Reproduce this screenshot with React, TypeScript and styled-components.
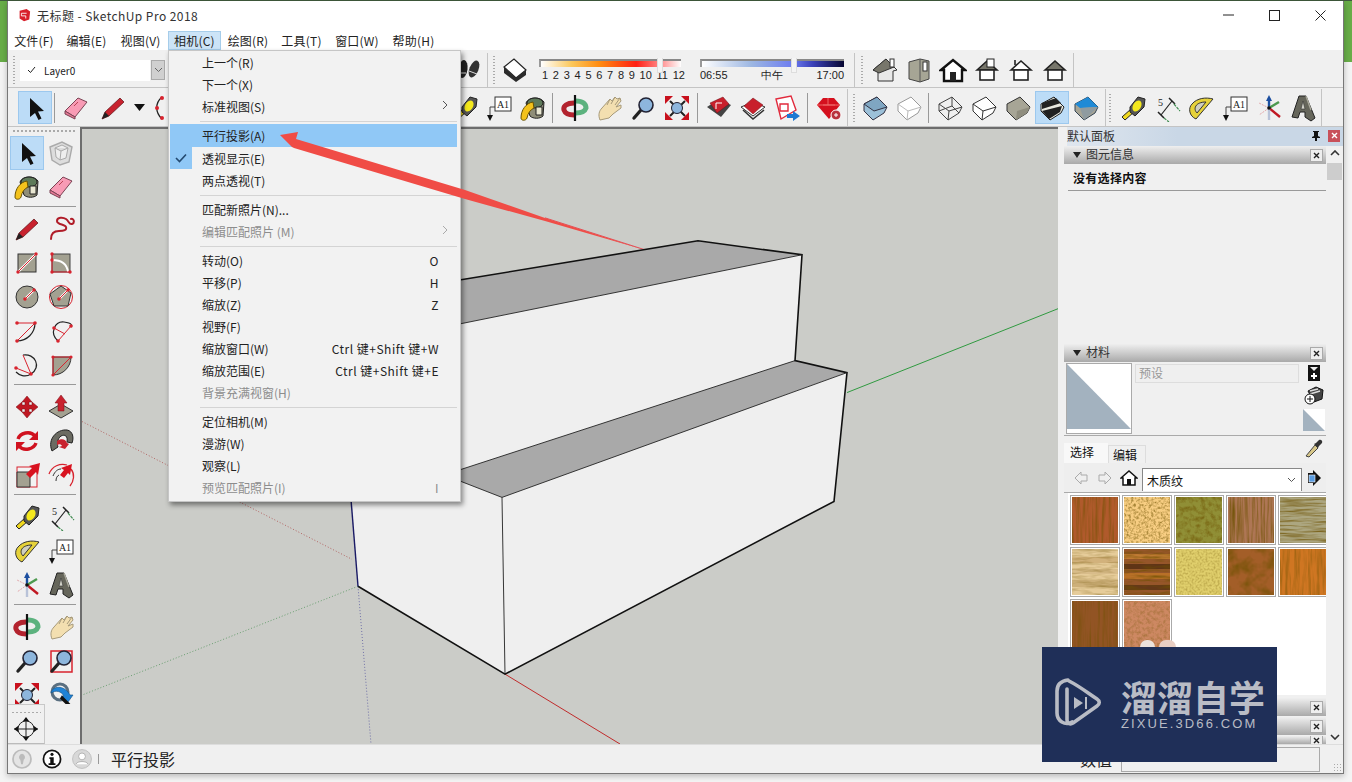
import React from "react";
import styled, { createGlobalStyle } from "styled-components";

const Global = createGlobalStyle`
  html, body { margin: 0; padding: 0; width: 1352px; height: 782px; overflow: hidden; background: #f4f4f4; }
  * { box-sizing: border-box; }
  body { font-family: "Noto Sans CJK SC", "Liberation Sans", sans-serif; font-size: 12px; color: #222; }
`;

const Page = styled.div`
  position: relative;
  width: 1352px;
  height: 782px;
  padding: 1px 8px 8px 7px;
  background:
    linear-gradient(#3f5a3c, #3f5a3c) top / 100% 1px no-repeat,
    linear-gradient(#68ad48, #68ad48) top / 100% 62px no-repeat,
    #f4f4f4;
`;
const Win = styled.div`
  display: flex;
  flex-direction: column;
  width: 100%;
  height: 100%;
  background: #f0f0f0;
  border: 1px solid #777;
  border-top: 0;
  box-shadow: 0 2px 6px rgba(0, 0, 0, 0.25);
`;
const TitleBar = styled.div`
  display: flex;
  align-items: center;
  height: 30px;
  padding: 0 0 2px 9px;
  background: #fff;
  flex: none;
`;
const TitleText = styled.span`
  margin-left: 6px;
  font-size: 12px;
  letter-spacing: 0.45px;
  color: #333;
`;
const WinButtons = styled.div`
  margin-left: auto;
  display: flex;
  height: 100%;
`;
const WinButton = styled.div`
  width: 46px;
  display: flex;
  align-items: center;
  justify-content: center;
`;
const MenuBar = styled.div`
  display: flex;
  height: 19px;
  background: #fff;
  flex: none;
`;
const MenuTop = styled.div<{ $w: number; $on?: boolean }>`
  width: ${(p) => p.$w}px;
  display: flex;
  align-items: center;
  justify-content: center;
  font-size: 12px;
  letter-spacing: 0.2px;
  color: #222;
  background: ${(p) => (p.$on ? "#cce4f7" : "transparent")};
  border: 1px solid ${(p) => (p.$on ? "#a6cdea" : "transparent")};
`;
const Bar = styled.div<{ $h: number; $pt?: number }>`
  display: flex;
  align-items: center;
  height: ${(p) => p.$h}px;
  padding-top: ${(p) => p.$pt ?? 0}px;
  background: #f0f0f0;
  border-bottom: 1px solid #c4c4c4;
  flex: none;
`;
const Gap = styled.div<{ $w: number }>`
  width: ${(p) => p.$w}px;
  flex: none;
`;
const Grip = styled.div`
  width: 2px;
  height: 28px;
  flex: none;
  background-image: linear-gradient(#aaa 50%, transparent 50%);
  background-size: 2px 3px;
`;
const Sep = styled.div<{ $l?: number; $r?: number }>`
  width: 1px;
  height: 30px;
  background: #999;
  flex: none;
  margin-left: ${(p) => p.$l ?? 2}px;
  margin-right: ${(p) => p.$r ?? 2}px;
`;
const Edge = styled.div<{ $l?: number; $r?: number }>`
  width: 1px;
  align-self: stretch;
  background: #c4c4c4;
  flex: none;
  margin-left: ${(p) => p.$l ?? 0}px;
  margin-right: ${(p) => p.$r ?? 0}px;
`;
const Btn = styled.div<{ $on?: boolean }>`
  width: 34px;
  height: 33px;
  flex: none;
  display: flex;
  align-items: center;
  justify-content: center;
  background: ${(p) => (p.$on ? "#bcdcf7" : "transparent")};
  border: 1px solid ${(p) => (p.$on ? "#9cc8ee" : "transparent")};
`;
const IconSvg = styled.svg<{ $s?: number }>`
  width: ${(p) => p.$s ?? 28}px;
  height: ${(p) => p.$s ?? 28}px;
  display: block;
  flex: none;
`;
const SmallBtn = styled.div`
  width: 18px;
  display: flex;
  align-items: center;
  justify-content: center;
  flex: none;
`;
const LayerBox = styled.div`
  width: 130px;
  height: 21px;
  margin-left: 5px;
  background: #fff;
  display: flex;
  align-items: center;
  padding-left: 7px;
  gap: 8px;
  font-size: 10px;
  flex: none;
`;
const LayerDrop = styled.div`
  width: 14px;
  height: 20px;
  margin-left: 1px;
  background: #d0d0d0;
  border: 1px solid #aaa;
  display: flex;
  align-items: center;
  justify-content: center;
  flex: none;
`;
const SliderWrap = styled.div<{ $w: number }>`
  position: relative;
  width: ${(p) => p.$w}px;
  flex: none;
  display: flex;
  flex-direction: column;
  gap: 2px;
`;
const Track = styled.div<{ $bg: string }>`
  height: 8px;
  background: ${(p) => p.$bg};
  border-top: 2px solid #888;
  border-left: 2px solid #999;
`;
const Thumb = styled.div`
  position: absolute;
  top: -1px;
  width: 6px;
  height: 15px;
  background: #f4f4f4;
  border: 1px solid #ddd;
  border-top: 0;
`;
const Ticks = styled.div<{ $wide?: boolean }>`
  display: flex;
  justify-content: space-between;
  margin: ${(p) => (p.$wide ? "0 -4px 0 3px" : "0")};
  font-family: "Liberation Sans", sans-serif;
  font-size: 11px;
  line-height: 12px;
  color: #222;
`;
const Body = styled.div`
  display: flex;
  flex: 1;
  min-height: 0;
`;
const LeftBar = styled.div`
  width: 72px;
  flex: none;
  display: flex;
  flex-direction: column;
  overflow: hidden;
  background: #f0f0f0;
`;
const LeftGrip = styled.div`
  height: 9px;
  flex: none;
  margin: 0 4px;
  background-image: radial-gradient(#aaa 0.8px, transparent 1px);
  background-size: 4px 4px;
  background-position: 0 2px;
  background-repeat: repeat-x;
`;
const ToolScroll = styled.div`
  flex: 1;
  min-height: 0;
  overflow: hidden;
  padding-left: 2px;
`;
const ToolGrid = styled.div`
  display: grid;
  grid-template-columns: 34px 34px;
  grid-auto-rows: 34px;
`;
const ToolRule = styled.div`
  height: 1px;
  background: #999;
  margin: 2px 4px 5px 4px;
`;
const ToolCell = styled.div<{ $on?: boolean }>`
  display: flex;
  align-items: center;
  justify-content: center;
  background: ${(p) => (p.$on ? "#bcdcf7" : "transparent")};
  border: 1px solid ${(p) => (p.$on ? "#9cc8ee" : "transparent")};
`;
const CameraBox = styled.div`
  width: 37px;
  height: 40px;
  flex: none;
  border: 1px solid #c8c8c8;
  border-left: 0;
  border-bottom-color: #bbb;
  display: flex;
  flex-direction: column;
  align-items: center;
  padding-top: 6px;
  gap: 1px;
`;
const CamDots = styled.div`
  width: 30px;
  height: 3px;
  flex: none;
  background-image: radial-gradient(#aaa 0.8px, transparent 1px);
  background-size: 4px 3px;
`;
const CanvasWrap = styled.div`
  width: 978px;
  flex: none;
  background: #cbccc8;
  border-left: 2px solid #6d6d6d;
  border-top: 2px solid #6d6d6d;
  overflow: hidden;
`;
const CanvasSvg = styled.svg`
  display: block;
  width: 100%;
  height: 100%;
`;
const Right = styled.div`
  flex: 1;
  min-width: 0;
  display: flex;
  flex-direction: column;
  padding-left: 6px;
  background: #f0f0f0;
`;
const PanelTitle = styled.div`
  height: 19px;
  flex: none;
  margin-left: 3px;
  display: flex;
  align-items: center;
  padding: 0 3px 2px 0;
  font-size: 12px;
  color: #333;
  background: linear-gradient(90deg, #dfe6ee, #c9d7e6 40%, #c9d7e6);
`;
const PinBox = styled.div`
  margin-left: auto;
  margin-right: 7px;
  display: flex;
`;
const CloseRed = styled.div`
  width: 12px;
  height: 12px;
  background: #c8505a;
  display: flex;
  align-items: center;
  justify-content: center;
`;
const PanelMain = styled.div`
  flex: 1;
  min-height: 0;
  display: flex;
`;
const Stack = styled.div`
  width: 262px;
  flex: none;
  display: flex;
  flex-direction: column;
  overflow: hidden;
`;
const Scroll = styled.div`
  flex: 1;
  position: relative;
  display: flex;
  flex-direction: column;
  align-items: center;
  justify-content: space-between;
  padding: 4px 0;
`;
const ScrollThumb = styled.div`
  position: absolute;
  top: 17px;
  left: 1px;
  width: 15px;
  height: 17px;
  background: #cdcdcd;
`;
const SecHead = styled.div<{ $h?: number; $mt?: number }>`
  height: ${(p) => p.$h ?? 18}px;
  margin-top: ${(p) => p.$mt ?? 0}px;
  flex: none;
  display: flex;
  align-items: center;
  padding: 0 3px 3px 9px;
  gap: 5px;
  font-size: 12px;
  color: #333;
  background: linear-gradient(#efefef, #a9a9a9);
  overflow: hidden;
`;
const Tri = styled.span`
  width: 0;
  height: 0;
  margin-top: 2px;
  border-left: 4px solid transparent;
  border-right: 4px solid transparent;
  border-top: 6px solid #222;
`;
const XBox = styled.div`
  margin: 3px 0 0 auto;
  width: 13px;
  height: 13px;
  flex: none;
  background: #eee;
  border: 1px solid #aaa;
  display: flex;
  align-items: center;
  justify-content: center;
`;
const InfoArea = styled.div`
  height: 180px;
  flex: none;
  padding: 5px 0 0 4px;
`;
const InfoText = styled.div`
  font-weight: 700;
  font-size: 12px;
  padding: 0 0 5px 5px;
  height: 22px;
  line-height: 18px;
  letter-spacing: 0.3px;
  border-bottom: 1px solid #999;
  color: #111;
`;
const MatRow = styled.div`
  height: 74px;
  flex: none;
  display: flex;
  padding: 1px 0 0 2px;
  border-bottom: 1px solid #aaa;
`;
const Preview = styled.div`
  width: 66px;
  height: 71px;
  flex: none;
  border: 1px solid #aaa;
  background: #fff;
`;
const NameInput = styled.div`
  width: 164px;
  height: 19px;
  flex: none;
  margin: 1px 0 0 3px;
  background: #efefef;
  border: 1px solid #ddd;
  color: #999;
  font-size: 12px;
  line-height: 16px;
  padding-left: 3px;
`;
const MatSide = styled.div`
  flex: 1;
  display: flex;
  flex-direction: column;
  align-items: center;
  padding-left: 2px;
`;
const Tabs = styled.div`
  height: 27px;
  flex: none;
  display: flex;
  align-items: flex-end;
  padding-right: 2px;
`;
const Tab = styled.div<{ $on?: boolean; $w: number; $pr: number }>`
  width: ${(p) => p.$w}px;
  height: ${(p) => (p.$on ? 20 : 18)}px;
  padding-right: ${(p) => p.$pr}px;
  background: ${(p) => (p.$on ? "#f8f8f8" : "#f0f0f0")};
  border: ${(p) => (p.$on ? "0" : "1px solid #ddd")};
  border-bottom: 0;
  text-align: center;
  font-size: 12px;
  line-height: 17px;
  color: #111;
`;
const TabEnd = styled.div`
  margin: 0 0 1px auto;
  align-self: center;
`;
const NavRow = styled.div`
  height: 30px;
  flex: none;
  display: flex;
  align-items: flex-end;
  padding: 0 0 1px 5px;
  background: #eeeeee;
  border-bottom: 1px solid #aaa;
`;
const NavBtn = styled.div`
  width: 24px;
  height: 26px;
  display: flex;
  align-items: center;
  justify-content: center;
  flex: none;
`;
const Select = styled.div`
  width: 160px;
  height: 23px;
  flex: none;
  margin-left: 1px;
  background: #fff;
  border: 1px solid #888;
  border-bottom: 0;
  display: flex;
  align-items: center;
  justify-content: space-between;
  padding: 0 5px 0 4px;
  font-size: 12px;
  color: #111;
`;
const Swatches = styled.div`
  height: 202px;
  flex: none;
  margin-left: 4px;
  background: #fff;
  padding: 3px 0 0 3px;
  display: grid;
  grid-template-columns: repeat(5, 48px);
  grid-auto-rows: 48px;
  gap: 4px;
  overflow: hidden;
`;
const Swatch = styled.div`
  outline: 1px solid #aaa;
  outline-offset: 1px;
  margin: 1px;
  overflow: hidden;
`;
const TexSvg = styled.svg`
  display: block;
  width: 46px;
  height: 46px;
`;
const Status = styled.div`
  height: 29px;
  flex: none;
  display: flex;
  align-items: center;
  background: #f0f0f0;
  border-top: 1px solid #ddd;
  position: relative;
`;
const StatusText = styled.div<{ $l: number }>`
  margin-left: ${(p) => p.$l}px;
  font-size: 16px;
  color: #222;
  flex: none;
`;
const StatusDiv = styled.div`
  width: 1px;
  height: 10px;
  background: #999;
  flex: none;
  margin-left: 4px;
`;
const StatusIcon = styled.div<{ $l: number }>`
  margin-left: ${(p) => p.$l}px;
  flex: none;
  display: flex;
`;
const StatusInput = styled.div`
  width: 199px;
  height: 25px;
  flex: none;
  margin-left: 9px;
  background: #f0f0f0;
  border: 1px solid #aaa;
`;
const ResizeGrip = styled.div`
  position: absolute;
  right: 1px;
  bottom: 1px;
  width: 9px;
  height: 9px;
  background-image: radial-gradient(#aaa 0.8px, transparent 1px);
  background-size: 3px 3px;
`;
const Menu = styled.div`
  position: absolute;
  left: 168px;
  top: 50px;
  width: 293px;
  height: 452px;
  background: #f2f2f2;
  border: 1px solid #c6c6c6;
  box-shadow: 2px 3px 5px rgba(0, 0, 0, 0.45);
  padding: 0 3px 0 1px;
`;
const Item = styled.div<{ $on?: boolean; $off?: boolean }>`
  position: relative;
  height: ${(p) => (p.$on ? 23 : 22)}px;
  display: flex;
  align-items: center;
  padding-left: 32px;
  padding-right: 18px;
  font-size: 12px;
  color: ${(p) => (p.$off ? "#8d8d8d" : "#222")};
  background: ${(p) => (p.$on ? "#90c8f6" : "transparent")};
`;
const ItemKey = styled.span`
  margin-left: auto;
  letter-spacing: 0.5px;
`;
const Sub = styled.span`
  position: absolute;
  right: 9px;
  top: 5px;
  display: flex;
`;
const CheckCell = styled.span`
  position: absolute;
  left: 0;
  top: 0;
  width: 22px;
  height: 22px;
  background: #90c8f6;
  display: flex;
  align-items: center;
  justify-content: center;
`;
const MenuRule = styled.div`
  height: 1px;
  margin: 4px 0 2px 30px;
  background: #d4d4d4;
`;
const Overlay = styled.svg`
  position: absolute;
  left: 0;
  top: 0;
  width: 1352px;
  height: 782px;
  pointer-events: none;
`;
const Mark = styled.div`
  position: absolute;
  left: 1042px;
  top: 647px;
  width: 235px;
  height: 115px;
  background: #1f2f58;
  display: flex;
  align-items: center;
  padding: 0 0 4px 13px;
  gap: 18px;
  &::before, &::after {
    content: "";
    position: absolute;
    top: -7px;
    width: 15px;
    height: 7px;
    border-radius: 8px 8px 0 0;
    background: #ece2dc;
  }
  &::before { left: 98px; }
  &::after { left: 117px; width: 17px; background: #e8cfc4; }
`;
const MarkText = styled.div`
  display: flex;
  flex-direction: column;
  color: #b9bcc5;
`;
const MarkBig = styled.div`
  font-size: 36px;
  font-weight: 700;
  line-height: 42px;
  white-space: nowrap;
`;
const MarkSmall = styled.div`
  font-family: "Liberation Sans", sans-serif;
  font-size: 13px;
  line-height: 14px;
  letter-spacing: 2.1px;
  white-space: nowrap;
`;

const R = "#d8232e";
const GY = "#a3a191";
const HEX = "M3 10 16 3 26 13 23 19 12 26 3 17z";
const HEXIN = "M3 10 13 17 26 13M13 17 12 26";
const house = (roof: string, wall: string, extra?: React.ReactNode) => (
  <>
    <path d="M4 14 14 5 24 14z" fill={roof} stroke="#222" strokeWidth="1.6" />
    <rect x="7" y="14" width="14" height="10" fill={wall} stroke="#222" strokeWidth="1.6" />
    {extra}
  </>
);
const zoomGlass = (
  <>
    <path d="M5 24 12 16" stroke="#222" strokeWidth="3.4" strokeLinecap="round" />
    <circle cx="17" cy="11" r="7" fill="#8db6dd" stroke="#223" strokeWidth="1.6" />
  </>
);

const icons: Record<string, React.ReactNode> = {
  select: <path d="M9 4v19l5-4 3.5 7 3-1.5-3.5-7 6-.5z" fill="#111" />,
  eraser: (
    <>
      <path d="M3 17 16 4l9 4-12 15z" fill="#f89bb5" stroke="#7a4354" />
      <path d="M3 17l10 6v2L3 20z" fill="#e67995" stroke="#7a4354" />
      <path d="M12 12l4-4" stroke="#b45" />
    </>
  ),
  pencil: (
    <>
      <path d="M3 25l3-7 15-14 4 4L10 22z" fill="#c8222e" stroke="#5a1116" strokeWidth=".7" />
      <path d="M3 25l3-7 4 4z" fill="#222" />
    </>
  ),
  arcSel: (
    <>
      <path d="M11 3C4 9 4 18 11 25" fill="none" stroke="#222" strokeWidth="1.3" />
      <circle cx="11" cy="4" r="2" fill={R} />
      <circle cx="11" cy="24" r="2" fill={R} />
      <circle cx="6" cy="14" r="2" fill={R} />
    </>
  ),
  paint: (
    <>
      <path d="M7 9C9 3 21 2 25 8l-1 14c-3 3-10 3-13 0z" fill="#8f8d78" stroke="#222" />
      <ellipse cx="16" cy="9" rx="8" ry="5" fill="#5e7a5a" stroke="#222" />
      <path d="M17 13h6v8h-6z" fill="#e9e7d2" stroke="#222" />
      <path d="M14 8C7 9 2 16 2 24c0 3 5 3 6 0 1-5 3-8 7-10z" fill="#f4c21c" stroke="#6a5200" />
    </>
  ),
  line: (
    <>
      <path d="M3 25l3-7 15-14 4 4L10 22z" fill="#c8222e" stroke="#5a1116" strokeWidth=".7" />
      <path d="M3 25l3-7 4 4z" fill="#222" />
    </>
  ),
  free: <path d="M4 24c0-5 3-8 8-8s8-1 7-4-9-2-9-6 6-4 9-2 3 6 6 5 2-6-1-5" fill="none" stroke="#b01c28" strokeWidth="2" strokeLinecap="round" />,
  rect: (
    <>
      <rect x="5" y="5" width="18" height="18" fill={GY} stroke="#333" />
      <path d="M5 23 23 5" stroke="#fff" strokeWidth="2.4" />
      <path d="M5 23 23 5" stroke={R} />
      <circle cx="23" cy="5" r="1.7" fill={R} />
      <circle cx="5" cy="23" r="1.7" fill={R} />
    </>
  ),
  rotrect: (
    <>
      <rect x="5" y="5" width="18" height="18" fill={GY} stroke="#444" />
      <path d="M5 11c10 0 15 4 16 12" fill="none" stroke="#fff" strokeWidth="2" />
      <path d="M5 5v18h18" fill="none" stroke={R} />
      <circle cx="5" cy="5" r="1.7" fill={R} />
      <circle cx="5" cy="23" r="1.7" fill={R} />
      <circle cx="23" cy="23" r="1.7" fill={R} />
      <circle cx="5" cy="11" r="1.7" fill={R} />
    </>
  ),
  circle: (
    <>
      <circle cx="14" cy="14" r="11" fill={GY} stroke="#333" />
      <path d="M12 16 21 7" stroke="#fff" strokeWidth="2.4" />
      <path d="M12 16 21 7" stroke={R} />
      <circle cx="12" cy="16" r="1.8" fill={R} />
      <circle cx="21" cy="7" r="1.7" fill={R} />
    </>
  ),
  polygon: (
    <>
      <circle cx="14" cy="14" r="11.5" fill="none" stroke={R} />
      <path d="M14 3 24 10 21 23 7 23 3 11z" fill={GY} stroke="#333" />
      <path d="M12 16 21 7" stroke="#fff" strokeWidth="2.2" />
      <path d="M12 16 21 7" stroke={R} />
      <circle cx="12" cy="16" r="1.8" fill={R} />
      <circle cx="21" cy="7" r="1.7" fill={R} />
    </>
  ),
  arc1: (
    <>
      <path d="M4 6H22L4 24" fill="none" stroke={R} />
      <path d="M4 24C14 24 22 16 22 6" fill="none" stroke="#222" strokeWidth="1.2" />
      <circle cx="4" cy="6" r="1.8" fill={R} />
      <circle cx="22" cy="6" r="1.8" fill={R} />
      <circle cx="4" cy="24" r="1.8" fill={R} />
    </>
  ),
  arc2: (
    <>
      <path d="M11 24C2 16 8 4 17 5s8 4 7 5" fill="none" stroke="#222" strokeWidth="1.2" />
      <path d="M11 24 24 9M7 11l11 6" stroke={R} />
      <circle cx="11" cy="24" r="1.8" fill={R} />
      <circle cx="24" cy="9" r="1.8" fill={R} />
      <circle cx="7" cy="11" r="1.8" fill={R} />
    </>
  ),
  arc3: (
    <>
      <path d="M10 4C22 2 29 16 18 23 12 27 6 24 3 21" fill="none" stroke="#222" strokeWidth="1.2" />
      <path d="M10 4 18 23 3 17" fill="none" stroke={R} />
      <circle cx="18" cy="23" r="1.8" fill={R} />
      <circle cx="3" cy="17" r="1.8" fill={R} />
    </>
  ),
  pie: (
    <>
      <path d="M6 24V6H24C24 16 16 24 6 24z" fill={GY} stroke="#333" />
      <path d="M6 24 24 6H6z" fill="none" stroke={R} />
      <circle cx="6" cy="6" r="1.6" fill={R} />
      <circle cx="24" cy="6" r="1.6" fill={R} />
      <circle cx="6" cy="24" r="1.6" fill={R} />
    </>
  ),
  move: <path d="M14 3l5 6h-3v3h3V9l6 5-6 5v-3h-3v3h3l-5 6-5-6h3v-3H9v3l-6-5 6-5v3h3V9H9z" fill="#c01822" stroke="#7a0f16" strokeWidth=".5" />,
  push: (
    <>
      <path d="M2 18 14 11 26 18 14 25z" fill={GY} stroke="#333" />
      <path d="M14 2l6 8h-3v8h-6v-8H8z" fill="#c8222e" stroke="#7a0f16" strokeWidth=".5" />
    </>
  ),
  rotate: (
    <>
      <path d="M5 12C7 6 17 3 22 9" fill="none" stroke="#d0121f" strokeWidth="3.4" />
      <path d="M23 16C21 22 11 25 6 19" fill="none" stroke="#d0121f" strokeWidth="3.4" />
      <path d="M25 4v9h-9zM3 24v-9h9z" fill="#d0121f" />
    </>
  ),
  follow: (
    <>
      <path d="M5 24C0 12 10 2 20 3c6 1 7 8 5 13l-5-1c1-6-2-8-6-6-4 3-4 8-3 11z" fill="#6b6b62" stroke="#222" />
      <path d="M10 14c4-3 9-2 10 2l2 1-4 5-6-2 3-1c-1-2-3-2-5-1z" fill="#c8222e" />
    </>
  ),
  scale: (
    <>
      <rect x="4" y="6" width="20" height="20" fill="#fff" fillOpacity=".2" stroke={R} />
      <path d="M4 11H17V26H4z" fill={GY} stroke="#333" />
      <path d="M27 2 16 5l3 2-6 6 4 4 6-6 2 3z" fill="#d8121f" />
    </>
  ),
  offset: (
    <>
      <path d="M2 13C5 5 13 2 20 4M24 8c4 5 3 12 -1 17" fill="none" stroke={R} strokeWidth="1.3" />
      <path d="M6 15C8 10 11 8 14 8M9 20c0-3 1-5 3-6" fill="none" stroke="#333" />
      <path d="M25 3 14 7l3 2-4 5 4 3 4-5 2 2z" fill="#d8121f" />
    </>
  ),
  tape: (
    <>
      <path d="M3 23 12 15l3 3-9 8z" fill="#f0d81e" stroke="#222" />
      <path d="M11 13 19 3l7 2-1 8-9 9-5-4z" fill="#555" stroke="#222" />
      <ellipse cx="18" cy="12" rx="4" ry="6" transform="rotate(30 18 12)" fill="#f4e81c" />
    </>
  ),
  dim: (
    <>
      <path d="M8 21 19 7" stroke="#222" strokeWidth="1.2" />
      <path d="M5 18l6 6M16 4l6 6" stroke="#222" strokeWidth="1.5" />
      <path d="M21 10l6 7M11 24l5 4" stroke="#3e8a4f" strokeWidth="1.2" strokeDasharray="3 1" />
      <text x="5" y="12" fontFamily="Liberation Serif" fontSize="10" fill="#222">5</text>
    </>
  ),
  proto: (
    <>
      <path d="M26 5 9 25C2 22 1 14 5 10 10 4 19 3 26 5z" fill="#e6d23a" stroke="#333" />
      <path d="M19 8 10 19C6 15 8 8 19 8z" fill="#cfcfc0" stroke="#333" />
    </>
  ),
  text: (
    <>
      <path d="M5 24V13h6" fill="none" stroke="#444" />
      <path d="M5 27 2 21h6z" fill="#111" />
      <rect x="10" y="3" width="16" height="14" fill="#fff" stroke="#333" />
      <text x="18" y="14" textAnchor="middle" fontFamily="Liberation Serif" fontSize="10" fill="#222">A1</text>
    </>
  ),
  axes: (
    <>
      <path d="M14 14V4" stroke="#1c4fa0" strokeWidth="2.4" />
      <path d="M14 1l3 6h-6z" fill="#1c4fa0" />
      <path d="M14 14 24 8" stroke="#4d9a4f" strokeWidth="2.4" />
      <path d="M14 14 25 23" stroke="#c01822" strokeWidth="2.4" />
      <path d="M14 14 4 21M14 14 4 9" stroke="#e3a8ab" strokeDasharray="2 1" />
      <path d="M14 14v12" stroke="#b8c2d8" strokeWidth="2.4" />
      <circle cx="14" cy="14" r="1.8" fill="#111" />
    </>
  ),
  text3d: (
    <>
      <path d="M10 2h7l9 22-4 3-6-4v-5h-5l-2 6-6-1z" fill="#66665b" stroke="#222" />
      <path d="M14 7l-2 8h4z" fill="#d4d4ca" stroke="#333" strokeWidth=".6" />
      <path d="M17 2l5 14" stroke="#aaa99c" strokeWidth="1.4" />
    </>
  ),
  orbit: (
    <>
      <path d="M13 9C6 9 2 12 3 16c1 3 5 5 10 5" fill="none" stroke="#b3232e" strokeWidth="5" />
      <path d="M15 7c7 0 10 3 10 7-1 3-4 5-10 5" fill="none" stroke="#5cb27e" strokeWidth="5" />
      <path d="M16 11l6 2-4 3z" fill="#eee" />
      <path d="M12 18l-6-2 4-3z" fill="#eee" />
      <path d="M14 1v26" stroke="#111" strokeWidth="2.2" />
    </>
  ),
  hand: (
    <>
      <path d="M5 26C3 21 4 17 7 14L15 5l2 2 3-4 2 2 3-1 1 3-5 6 5-2v3l-8 6-4 4z" fill="#f3dfb0" stroke="#a79a7a" />
      <path d="M15 5l-3 6M20 3l-4 7M25 4l-5 7" stroke="#a79a7a" fill="none" />
    </>
  ),
  zoom: zoomGlass,
  zoomWin: (
    <>
      <rect x="4" y="4" width="21" height="21" fill="none" stroke={R} strokeWidth="1.5" />
      {zoomGlass}
    </>
  ),
  zoomExt: (
    <>
      <path d="M7 22 12 17M22 22 17 17M7 7l5 5M22 7l-5 5" stroke="#222" strokeWidth="2" />
      <circle cx="14" cy="14" r="5.5" fill="#8db6dd" stroke="#223" />
      <path d="M2 2h8l-8 8zM26 2v8l-8-8zM2 26v-8l8 8zM26 26h-8l8-8z" fill="#c8101c" />
    </>
  ),
  prev: (
    <>
      <circle cx="13" cy="11" r="8" fill="none" stroke="#5a6f80" strokeWidth="3" />
      <path d="M4 12C5 5 17 3 23 14h3l-5 7-7-6h3C14 10 9 9 4 12z" fill="#1f83d6" stroke="#124d80" strokeWidth=".6" />
      <path d="M14 16 25 27" stroke="#111" strokeWidth="3.4" />
    </>
  ),
  position: (
    <>
      <circle cx="14" cy="14" r="8" fill="none" stroke="#222" />
      <path d="M2 14H26M14 3V25" stroke="#222" />
      <path d="M2 14l4-3v6zM26 14l-4-3v6zM14 2l-3 4h6zM14 26l-3-4h6z" fill="#111" />
    </>
  ),
  feet: (
    <>
      <ellipse cx="9" cy="13" rx="4.5" ry="9" transform="rotate(8 9 13)" fill="#222" />
      <ellipse cx="20" cy="13" rx="4.5" ry="9" transform="rotate(22 20 13)" fill="#333" />
      <path d="M4 17h8M15 15l8 3" stroke="#ddd" />
    </>
  ),
  shadow: (
    <>
      <path d="M3 11 13 3l12 11-10 8z" fill="#fff" stroke="#222" strokeWidth="1.2" />
      <path d="M3 11v6l12 9 10-7v-5L15 22z" fill="#2b2b2b" />
    </>
  ),
  h1: (
    <>
      <path d="M2 14 15 3l11 11-4 1v10H7V15z" fill="#e8e8e8" stroke="#333" />
      <path d="M2 14 15 3l8 8-15 6z" fill="#77766b" stroke="#333" />
      <rect x="19" y="3" width="4" height="8" fill="#fff" stroke="#333" />
    </>
  ),
  h2: (
    <>
      <path d="M4 6 15 3l9 2v18l-9 3-11-3z" fill="#a6a595" stroke="#444" />
      <path d="M15 3v23" stroke="#555" />
      <rect x="18" y="6" width="4" height="9" fill="#fff" stroke="#333" />
    </>
  ),
  h3: (
    <>
      <path d="M2 14 14 4l12 10h-3v11H5V14z" fill="#fff" stroke="#111" strokeWidth="2.4" />
      <rect x="11" y="16" width="6" height="9" fill="#222" />
    </>
  ),
  h4: house("#77766b", "#fff", <rect x="14" y="3" width="7" height="8" fill="#fff" stroke="#222" />),
  h5: house("#fff", "#fff", <path d="M8 4v5" stroke="#222" strokeWidth="1.6" />),
  h6: house("#77766b", "#fff"),
  cIso: (
    <>
      <path d={HEX} fill="#9cc0d8" stroke="#334" />
      <path d="M3 10 13 17 26 13 16 3z" fill="#7fa6c2" stroke="#334" />
    </>
  ),
  cGhost: (
    <>
      <path d={HEX} fill="#fff" stroke="#999" />
      <path d={HEXIN} stroke="#bbb" fill="none" />
    </>
  ),
  cWire: (
    <>
      <path d={HEX} fill="none" stroke="#444" />
      <path d={HEXIN} stroke="#444" fill="none" />
      <path d="M16 3V12L3 17M16 12 23 19" stroke="#444" fill="none" />
    </>
  ),
  cHidden: (
    <>
      <path d={HEX} fill="#fff" stroke="#333" />
      <path d={HEXIN} stroke="#333" fill="none" />
    </>
  ),
  cShade: (
    <>
      <path d={HEX} fill="#a7a596" stroke="#333" />
      <path d="M13 17 12 26 23 19 26 13z" fill="#8f8d7e" />
    </>
  ),
  cStripe: (
    <>
      <path d={HEX} fill="#e9e9e0" stroke="#222" />
      <path d="M4 9 18 4l5 5-19 6zM4 17l20-5-2 6-11 7z" fill="#222" />
    </>
  ),
  cBlue: (
    <>
      <path d={HEX} fill="#a7a596" stroke="#345" />
      <path d="M16 3 26 13 8 14 3 10z" fill="#1f8ad6" />
      <path d="M8 14 26 13 12 26z" fill="#8f9ba0" />
    </>
  ),
  wh1: (
    <>
      <path d="M2 13 14 5l12 6-10 12z" fill="#444" />
      <path d="M5 9 18 3l6 7-12 9z" fill="#c8202c" stroke="#701018" strokeWidth=".5" />
      <path d="M11 9h6M11 9v6" stroke="#fff" />
    </>
  ),
  wh2: (
    <>
      <path d="M2 13 14 22 26 13 14 8z" fill="#fff" stroke="#333" />
      <path d="M5 12 14 4l10 7-10 9z" fill="#c8202c" stroke="#701018" strokeWidth=".5" />
      <path d="M4 16 14 25l11-9" fill="none" stroke="#333" strokeWidth="1.6" />
    </>
  ),
  wh3: (
    <>
      <path d="M3 5 18 2l5 14-15 9z" fill="#fff" stroke="#e12a3c" strokeWidth="1.4" />
      <path d="M7 10h8v7H7z" fill="none" stroke="#e12a3c" strokeWidth="1.4" />
      <path d="M14 20h6v-3l7 5-7 5v-3h-6z" fill="#1d78d2" />
    </>
  ),
  ruby: (
    <>
      <path d="M3 11 9 4h11l6 7-11 14z" fill="#d4101e" />
      <path d="M9 11h12M3 11h23M14 4v7" stroke="#e66" />
      <circle cx="22" cy="21" r="5" fill="#b8323e" stroke="#fff" />
      <path d="M20 21h4M22 19v4" stroke="#fff" />
    </>
  ),
  sFind: (
    <>
      <circle cx="14" cy="14" r="10.5" fill="#e4e4e4" stroke="#bcbcbc" strokeWidth="2" />
      <path d="M14 8a4 4 0 0 1 2 7l-1 5h-2l-1-5a4 4 0 0 1 2-7z" fill="#bbb" />
    </>
  ),
  sInfo: (
    <>
      <circle cx="14" cy="14" r="10" fill="#fff" stroke="#111" strokeWidth="2" />
      <circle cx="14" cy="8.6" r="1.8" fill="#111" />
      <path d="M11 12h5v7h2v2h-8v-2h2v-5h-1z" fill="#111" />
    </>
  ),
  sUser: (
    <>
      <circle cx="14" cy="14" r="11" fill="#d8d8d8" stroke="#bbb" />
      <circle cx="14" cy="11" r="4" fill="#fff" stroke="#aaa" />
      <path d="M7 20c1-4 13-4 14 0" fill="#fff" stroke="#aaa" />
    </>
  ),
  cGhostBox: (
    <>
      <path d="M3 8 15 3l10 5-3 15-9 3-8-5z" fill="#ddd" stroke="#aaa" strokeWidth="1.4" />
      <path d="M8 9 15 6l6 3-2 10-6 2-4-3zM8 9l6 3 7-3M14 12l-1 9" fill="#eee" stroke="#aaa" />
    </>
  ),
};

const Icon = ({ n, s }: { n: string; s?: number }) => (
  <IconSvg viewBox="0 0 28 28" $s={s}>{icons[n]}</IconSvg>
);
const B = ({ n, on }: { n: string; on?: boolean }) => (
  <Btn $on={on}>
    <Icon n={n} />
  </Btn>
);
const Chev = ({ c = "#444" }: { c?: string }) => (
  <svg width="9" height="6" viewBox="0 0 9 6">
    <path d="M1 1l3.5 3.5L8 1" fill="none" stroke={c} />
  </svg>
);
const Cross = ({ c = "#222" }: { c?: string }) => (
  <svg width="7" height="7" viewBox="0 0 7 7">
    <path d="M1 1l5 5M6 1 1 6" stroke={c} strokeWidth="1.4" />
  </svg>
);

const topMenu: [string, number, boolean?][] = [
  ["文件(F)", 52],
  ["编辑(E)", 53],
  ["视图(V)", 55],
  ["相机(C)", 53, true],
  ["绘图(R)", 54],
  ["工具(T)", 53],
  ["窗口(W)", 58],
  ["帮助(H)", 55],
];

const leftGroups = [
  ["select", "cGhostBox", "paint", "eraser"],
  ["line", "free", "rect", "rotrect", "circle", "polygon", "arc1", "arc2", "arc3", "pie"],
  ["move", "push", "rotate", "follow", "scale", "offset"],
  ["tape", "dim", "proto", "text", "axes", "text3d"],
  ["orbit", "hand", "zoom", "zoomWin", "zoomExt", "prev"],
];

type Tex = { c: string; fx: number; fy: number; k?: number; bands?: [number, number, string][] };
const swatches: Tex[] = [
  { c: "#b05a2c", fx: 0.35, fy: 0.02, k: 0.5 },
  { c: "#f7cd82", fx: 0.4, fy: 0.4, k: 0.45 },
  { c: "#908f36", fx: 0.2, fy: 0.2, k: 0.45 },
  { c: "#ae7655", fx: 0.4, fy: 0.02, k: 0.6 },
  { c: "#aca680", fx: 0.03, fy: 0.5, k: 0.6 },
  {
    c: "#e6cc9a", fx: 0.05, fy: 0.3, k: 0.3,
    bands: [[8, 6, "#d2b27c"], [20, 5, "#d8bc8a"], [31, 7, "#cdb07a"]],
  },
  {
    c: "#96562a", fx: 0.05, fy: 0.3, k: 0.5,
    bands: [[5, 5, "#c07a34"], [15, 5, "#5f3416"], [24, 6, "#b87028"], [36, 5, "#643818"]],
  },
  { c: "#e0cf6c", fx: 0.5, fy: 0.5, k: 0.25 },
  { c: "#a35e28", fx: 0.08, fy: 0.08, k: 0.55 },
  { c: "#cf7622", fx: 0.35, fy: 0.03, k: 0.35 },
  { c: "#925424", fx: 0.35, fy: 0.02, k: 0.45 },
  { c: "#cd8862", fx: 0.3, fy: 0.3, k: 0.25 },
];

const TexArt = ({ t, i }: { t: Tex; i: number }) => (
  <TexSvg viewBox="0 0 46 46">
    <filter id={`tex${i}`} x="0" y="0" width="100%" height="100%">
      <feTurbulence type="fractalNoise" baseFrequency={`${t.fx} ${t.fy}`} numOctaves="3" seed={i + 3} />
      <feColorMatrix values={`0 0 0 0 0.15  0 0 0 0 0.08  0 0 0 0 0  ${(t.k ?? 0.5) * 3} 0 0 0 ${-(t.k ?? 0.5) * 1.2}`} />
    </filter>
    <rect width="46" height="46" fill={t.c} />
    {t.bands?.map(([y, h, c]) => <rect key={y} y={y} width="46" height={h} fill={c} />)}
    <rect width="46" height="46" filter={`url(#tex${i})`} />
  </TexSvg>
);

const Item2 = ({ t, k, off, on, check, sub }: { t: string; k?: string; off?: boolean; on?: boolean; check?: boolean; sub?: boolean }) => (
  <Item $off={off} $on={on}>
    {check && (
      <CheckCell>
        <svg width="12" height="10" viewBox="0 0 12 10">
          <path d="M1 5l3.5 3.5L11 1.5" fill="none" stroke="#244a70" strokeWidth="1.6" />
        </svg>
      </CheckCell>
    )}
    {t}
    {k && <ItemKey>{k}</ItemKey>}
    {sub && (
      <Sub>
        <svg width="6" height="10" viewBox="0 0 6 10">
          <path d="M1 1l4 4-4 4" fill="none" stroke={off ? "#aaa" : "#555"} />
        </svg>
      </Sub>
    )}
  </Item>
);

export default function App() {
  return (
    <Page>
      <Global />
      <Win>
        <TitleBar>
          <svg width="14" height="16" viewBox="0 0 16 16">
            <path d="M3 3 11 1l4 3-1 9-6 2-5-3z" fill="#d8202c" />
            <path d="M5 6h6M5 6v3h5v3" fill="none" stroke="#fff" />
          </svg>
          <TitleText>无标题 - SketchUp Pro 2018</TitleText>
          <WinButtons>
            <WinButton>
              <svg width="11" height="2" viewBox="0 0 11 2"><path d="M0 1h11" stroke="#222" /></svg>
            </WinButton>
            <WinButton>
              <svg width="11" height="11" viewBox="0 0 11 11"><rect x=".5" y=".5" width="10" height="10" fill="none" stroke="#222" /></svg>
            </WinButton>
            <WinButton>
              <svg width="11" height="11" viewBox="0 0 11 11"><path d="M.5.5l10 10M10.5.5l-10 10" stroke="#222" /></svg>
            </WinButton>
          </WinButtons>
        </TitleBar>
        <MenuBar>
          {topMenu.map(([t, w, on]) => (
            <MenuTop key={t} $w={w} $on={on}>{t}</MenuTop>
          ))}
        </MenuBar>

        <Bar $h={38} $pt={3}>
          <Gap $w={5} />
          <Grip />
          <LayerBox>
            <svg width="9" height="8" viewBox="0 0 9 8"><path d="M1 4l2.5 2.5L8 1" fill="none" stroke="#222" /></svg>
            Layer0
          </LayerBox>
          <LayerDrop><Chev c="#666" /></LayerDrop>
          <Gap $w={286} />
          <B n="feet" />
          <Edge $l={2} $r={5} />
          <Grip />
          <Gap $w={3} />
          <B n="shadow" />
          <Gap $w={7} />
          <SliderWrap $w={142}>
            <Track $bg="linear-gradient(90deg,#fff 0%,#fbc75a 22%,#ff8a10 42%,#ff1f14 68%,#ff8f8f 86%,#fff 100%)" />
            <Ticks $wide>
              <span>1</span><span>2</span><span>3</span><span>4</span><span>5</span><span>6</span><span>7</span><span>8</span><span>9</span><span>10</span><span>11</span><span>12</span>
            </Ticks>
            <Thumb style={{ left: 118 }} />
          </SliderWrap>
          <Gap $w={19} />
          <SliderWrap $w={144}>
            <Track $bg="linear-gradient(90deg,#fff 0%,#9cb6e2 35%,#6d7cf0 64%,#3a40b8 78%,#050530 100%)" />
            <Ticks>
              <span>06:55</span><span>中午</span><span>17:00</span>
            </Ticks>
            <Thumb style={{ left: 91 }} />
          </SliderWrap>
          <Edge $l={10} $r={6} />
          <Grip />
          <Gap $w={5} />
          <B n="h1" /><B n="h2" /><B n="h3" /><B n="h4" /><B n="h5" /><B n="h6" />
          <Edge $l={1} />
        </Bar>

        <Bar $h={39} $pt={1}>
          <Gap $w={10} />
          <B n="select" on />
          <Sep />
          <Gap $w={2} />
          <B n="eraser" />
          <Gap $w={3} />
          <B n="pencil" />
          <SmallBtn>
            <svg width="11" height="7" viewBox="0 0 11 7"><path d="M0 0h11L5.5 7z" fill="#111" /></svg>
          </SmallBtn>
          <B n="arcSel" />
          <Gap $w={266} />
          <B n="tape" /><B n="text" /><B n="paint" />
          <Sep />
          <Gap $w={3} />
          <B n="orbit" /><B n="hand" /><B n="zoom" /><B n="zoomExt" />
          <Sep $l={3} $r={4} />
          <B n="wh1" /><B n="wh2" /><B n="wh3" />
          <Sep $l={3} $r={3} />
          <B n="ruby" />
          <Edge $l={2} $r={5} />
          <Grip />
          <Gap $w={3} />
          <B n="cIso" /><B n="cGhost" />
          <Sep $l={2} $r={4} />
          <B n="cWire" /><B n="cHidden" /><B n="cShade" /><B n="cStripe" on /><B n="cBlue" />
          <Edge $l={2} $r={3} />
          <Grip />
          <Gap $w={5} />
          <B n="tape" /><B n="dim" /><B n="proto" /><B n="text" /><B n="axes" /><B n="text3d" />
          <Edge $l={1} />
        </Bar>

        <Body>
          <LeftBar>
            <LeftGrip />
            <ToolScroll>
              {leftGroups.map((g, i) => (
                <React.Fragment key={i}>
                  {i > 0 && <ToolRule />}
                  <ToolGrid>
                    {g.map((n, j) => (
                      <ToolCell key={j} $on={i === 0 && j === 0}>
                        <Icon n={n} />
                      </ToolCell>
                    ))}
                  </ToolGrid>
                </React.Fragment>
              ))}
            </ToolScroll>
            <CameraBox>
              <CamDots />
              <Icon n="position" />
            </CameraBox>
          </LeftBar>

          <CanvasWrap>
            <CanvasSvg viewBox="82 129 976 616" preserveAspectRatio="none">
              <path d="M545 218 645 250" stroke="#e0505a" strokeWidth="1" />
              <path d="M847 393 1058 309" stroke="#2f9a3f" strokeWidth="1" />
              <path d="M82 422 352 560" stroke="#a83a3a" strokeDasharray="1 2" strokeWidth="1" opacity=".7" />
              <path d="M358 587 82 696" stroke="#3f8a4a" strokeDasharray="1 2" strokeWidth="1" opacity=".7" />
              <path d="M358 587 371 745" stroke="#4a4a9a" strokeDasharray="1 2" strokeWidth="1" opacity=".7" />
              <path d="M505 675 620 745" stroke="#c02a2a" strokeWidth="1" />

              <path d="M461 280 698 241 802 255 461 324z" fill="#a9a9a9" />
              <path d="M461 324 802 255 795 361 461 470z" fill="#efefef" />
              <path d="M461 470 795 361 847 373 502 498 461 482z" fill="#a9a9a9" />
              <path d="M502 498 847 373 834 502 505 675z" fill="#efefef" />
              <path d="M350 480 461 482 502 498 505 675 358 587z" fill="#efefef" />

              <path d="M461 280 698 241 802 255 795 361 847 373 834 502 505 675 358 587" fill="none" stroke="#111" strokeWidth="1.6" />
              <path d="M461 324 802 255M461 470 795 361M461 482 502 498 847 373M502 498 505 675" fill="none" stroke="#222" strokeWidth=".9" />
              <path d="M351 500 358 587" stroke="#1a1a66" strokeWidth="1.4" />
            </CanvasSvg>
          </CanvasWrap>

          <Right>
            <PanelTitle>
              默认面板
              <PinBox>
                <svg width="10" height="12" viewBox="0 0 10 12">
                  <path d="M2 1h6v1H7v4l2 1v1H6v3H4V8H1V7l2-1V2H2z" fill="#111" />
                </svg>
              </PinBox>
              <CloseRed><Cross c="#fff" /></CloseRed>
            </PanelTitle>
            <PanelMain>
              <Stack>
                <SecHead>
                  <Tri />图元信息<XBox><Cross /></XBox>
                </SecHead>
                <InfoArea>
                  <InfoText>没有选择内容</InfoText>
                </InfoArea>
                <SecHead>
                  <Tri />材料<XBox><Cross /></XBox>
                </SecHead>
                <MatRow>
                  <Preview>
                    <svg width="64" height="69" viewBox="0 0 64 69">
                      <path d="M0 0 64 65H0z" fill="#a3b2bf" />
                    </svg>
                  </Preview>
                  <NameInput>预设</NameInput>
                  <MatSide>
                    <svg width="14" height="18" viewBox="0 0 14 18" style={{ marginTop: 1 }}>
                      <rect x="1" y="1" width="12" height="16" fill="#111" />
                      <path d="M3 3h8l-4 4z" fill="#eee" />
                      <path d="M7 9v6M4 12h6" stroke="#fff" strokeWidth="2" />
                    </svg>
                    <svg width="20" height="20" viewBox="0 0 20 20" style={{ marginTop: 4 }}>
                      <path d="M4 5 12 1l7 3-1 9-8 3z" fill="#444" stroke="#111" />
                      <path d="M6 5l8-2M6 8l10-3" stroke="#ddd" strokeWidth="1.4" />
                      <circle cx="6" cy="13" r="5" fill="#fff" stroke="#111" />
                      <path d="M3 13h6M6 10v6" stroke="#111" />
                    </svg>
                    <svg width="22" height="22" viewBox="0 0 22 22" style={{ marginTop: 3 }}>
                      <rect width="22" height="22" fill="#fff" />
                      <path d="M0 0 22 22H0z" fill="#a3b2bf" />
                    </svg>
                  </MatSide>
                </MatRow>
                <Tabs>
                  <Tab $on $w={44} $pr={8}>选择</Tab>
                  <Tab $w={38} $pr={4}>编辑</Tab>
                  <TabEnd>
                    <svg width="20" height="20" viewBox="0 0 20 20">
                      <path d="M2 18 11 7l3 3-9 9z" fill="#d8c88a" stroke="#444" />
                      <path d="M12 5l3-3c2-1 4 1 3 3l-3 3-1 2-4-4z" fill="#333" />
                    </svg>
                  </TabEnd>
                </Tabs>
                <NavRow>
                  <NavBtn>
                    <svg width="14" height="14" viewBox="0 0 14 14"><path d="M7 1 1 7l6 6V10h6V4H7z" fill="#efefef" stroke="#aaa" /></svg>
                  </NavBtn>
                  <NavBtn>
                    <svg width="14" height="14" viewBox="0 0 14 14"><path d="M7 1l6 6-6 6V10H1V4h6z" fill="#efefef" stroke="#aaa" /></svg>
                  </NavBtn>
                  <NavBtn>
                    <svg width="18" height="18" viewBox="0 0 18 18">
                      <path d="M1 9 9 2l8 7h-2v7H3V9z" fill="#fff" stroke="#111" strokeWidth="1.5" />
                      <rect x="7" y="10" width="4" height="6" fill="#111" />
                    </svg>
                  </NavBtn>
                  <Select>
                    木质纹
                    <Chev c="#555" />
                  </Select>
                  <NavBtn>
                    <svg width="14" height="16" viewBox="0 0 14 16">
                      <path d="M1 3h5V0l8 8-8 8v-3H1z" fill="#111" />
                      <rect x="2" y="5" width="6" height="7" fill="#5a9ce0" stroke="#fff" strokeWidth=".6" />
                    </svg>
                  </NavBtn>
                </NavRow>
                <Swatches>
                  {swatches.map((s, i) => (
                    <Swatch key={i}>
                      <TexArt t={s} i={i} />
                    </Swatch>
                  ))}
                </Swatches>
                <SecHead $mt={3}><XBox><Cross /></XBox></SecHead>
                <SecHead $mt={1}><XBox><Cross /></XBox></SecHead>
                <SecHead $h={8} $mt={1}><XBox><Cross /></XBox></SecHead>
              </Stack>
              <Scroll>
                <svg width="10" height="6" viewBox="0 0 10 6"><path d="M1 5l4-4 4 4" fill="none" stroke="#333" strokeWidth="1.6" /></svg>
                <ScrollThumb />
                <svg width="10" height="6" viewBox="0 0 10 6"><path d="M1 1l4 4 4-4" fill="none" stroke="#333" strokeWidth="1.6" /></svg>
              </Scroll>
            </PanelMain>
          </Right>
        </Body>

        <Status>
          <StatusIcon $l={2}><Icon n="sFind" s={24} /></StatusIcon>
          <StatusIcon $l={6}><Icon n="sInfo" s={24} /></StatusIcon>
          <StatusIcon $l={6}><Icon n="sUser" s={24} /></StatusIcon>
          <StatusDiv />
          <StatusText $l={12}>平行投影</StatusText>
          <StatusText $l={905}>数值</StatusText>
          <StatusInput />
          <ResizeGrip />
        </Status>
      </Win>

      <Menu>
        <Item2 t="上一个(R)" />
        <Item2 t="下一个(X)" />
        <Item2 t="标准视图(S)" sub />
        <MenuRule />
        <Item2 t="平行投影(A)" on />
        <Item2 t="透视显示(E)" check />
        <Item2 t="两点透视(T)" />
        <MenuRule />
        <Item2 t="匹配新照片(N)..." />
        <Item2 t="编辑匹配照片 (M)" off sub />
        <MenuRule />
        <Item2 t="转动(O)" k="O" />
        <Item2 t="平移(P)" k="H" />
        <Item2 t="缩放(Z)" k="Z" />
        <Item2 t="视野(F)" />
        <Item2 t="缩放窗口(W)" k="Ctrl 键+Shift 键+W" />
        <Item2 t="缩放范围(E)" k="Ctrl 键+Shift 键+E" />
        <Item2 t="背景充满视窗(H)" off />
        <MenuRule />
        <Item2 t="定位相机(M)" />
        <Item2 t="漫游(W)" />
        <Item2 t="观察(L)" />
        <Item2 t="预览匹配照片(I)" k="I" off />
      </Menu>

      <Overlay viewBox="0 0 1352 782">
        <path d="M280 135 298 132 296 139 465 190 545 218 645 250 545 221 465 199 294 148 292 147z" fill="#f04c46" />
      </Overlay>

      <Mark>
        <svg width="48" height="50" viewBox="0 0 48 50">
          <path d="M13 2C6 3 2 6 2 13v22c0 8 8 13 15 9M14 3c10 5 19 12 28 18 3 2 3 5 0 7L18 45c-3 2-6 0-6-3V11" fill="none" stroke="#b9bcc5" strokeWidth="3.6" strokeLinecap="round" />
          <path d="M19 19v12l9-6z" fill="#b9bcc5" />
          <path d="M31 19v12" stroke="#b9bcc5" strokeWidth="2" />
        </svg>
        <MarkText>
          <MarkBig>溜溜自学</MarkBig>
          <MarkSmall>ZIXUE.3D66.COM</MarkSmall>
        </MarkText>
      </Mark>
    </Page>
  );
}
